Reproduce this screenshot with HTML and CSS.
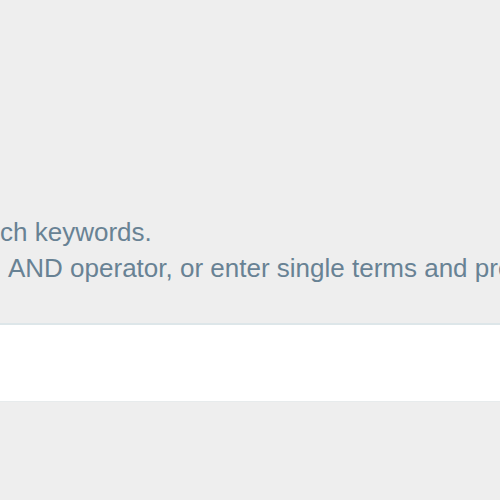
FILE: index.html
```html
<!DOCTYPE html>
<html>
<head>
<meta charset="utf-8">
<link rel="stylesheet" href="styles.css">
</head>
<body>
<div class="page">
  <div class="help">
    <p class="line line-first">ch keywords.</p>
    <p class="line line-second">AND operator, or enter single terms and press Enter.</p>
  </div>
  <div class="input-panel"></div>
</div>
</body>
</html>
```

FILE: styles.css
```css
html, body {
  margin: 0;
  padding: 0;
  background: #eeeeee;
}
.page {
  width: 500px;
  height: 500px;
  overflow: hidden;
  padding-top: 214px;
  box-sizing: border-box;
}
.help {
  font-family: "Liberation Sans", Arial, Helvetica, sans-serif;
  font-size: 26px;
  line-height: 36px;
  color: #688294;
  white-space: nowrap;
  overflow: hidden;
}
.line {
  margin: 0;
}
.line-first {
  padding-left: 0;
}
.line-second {
  padding-left: 8px;
}
.input-panel {
  margin-top: 37px;
  height: 76px;
  background: #ffffff;
  border-top: 2px solid #dde6e9;
  border-bottom: 1px solid #e7ebec;
}
```
